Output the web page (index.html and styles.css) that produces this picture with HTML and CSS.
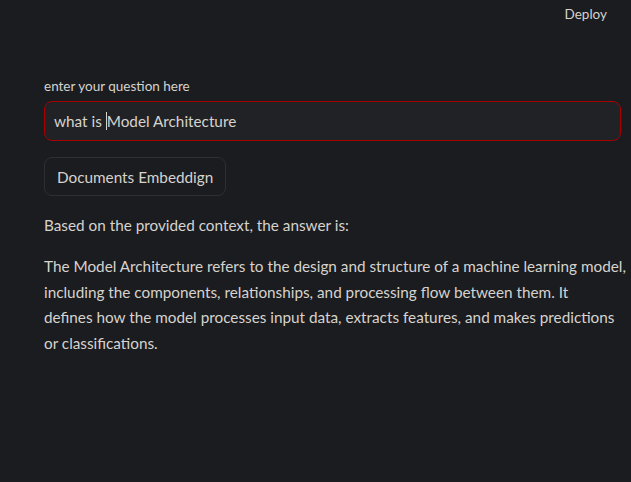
FILE: index.html
```html
<!DOCTYPE html>
<html>
<head>
<meta charset="utf-8">
<link rel="stylesheet" href="styles.css">
</head>
<body>
<header class="topbar"><span class="deploy">Deploy</span></header>
<main class="main">
  <label class="label">enter your question here</label>
  <div class="input"><span>what is </span><span class="caret"></span><span>Model Architecture</span></div>
  <div class="btnrow"><button class="btn">Documents Embeddign</button></div>
  <p class="para">Based on the provided context, the answer is:</p>
  <p class="para">The Model Architecture refers to the design and structure of a machine learning model, including the components, relationships, and processing flow between them. It <span class="nw">defines how</span> the model processes input data, extracts features, and makes predictions or classifications.</p>
</main>
</body>
</html>
```
FILE: styles.css
```css
html, body { margin: 0; padding: 0; background: #1b1c1f; }
body { font-family: Lato, "Open Sans", sans-serif; color: #d6d3ce; width: 631px; height: 482px; overflow: hidden; }
.topbar { height: 28px; display: flex; justify-content: flex-end; align-items: center; padding-right: 24px; }
.deploy { font-size: 13.5px; }
.main { padding: 49px 10px 0 44px; display: flex; flex-direction: column; }
.label { font-size: 13.5px; line-height: 18px; margin-bottom: 6px; }
.input { height: 38px; border: 1px solid #a80000; border-radius: 8px; background: #212226; display: flex; align-items: center; padding-left: 9px; font-size: 15.3px; white-space: pre; }
.caret { width: 1px; height: 18px; background: #d6d3ce; }
.btnrow { margin-top: 16px; margin-bottom: 17px; }
.btn { height: 39px; padding: 0 12px; border: 1px solid #2e2f33; border-radius: 8px; background: #1b1c1f; color: #d6d3ce; font: inherit; font-size: 15.3px; }
.para { margin: 0 -6px 15.4px 0; font-size: 15.3px; line-height: 25.6px; }
.nw { white-space: nowrap; }
```
